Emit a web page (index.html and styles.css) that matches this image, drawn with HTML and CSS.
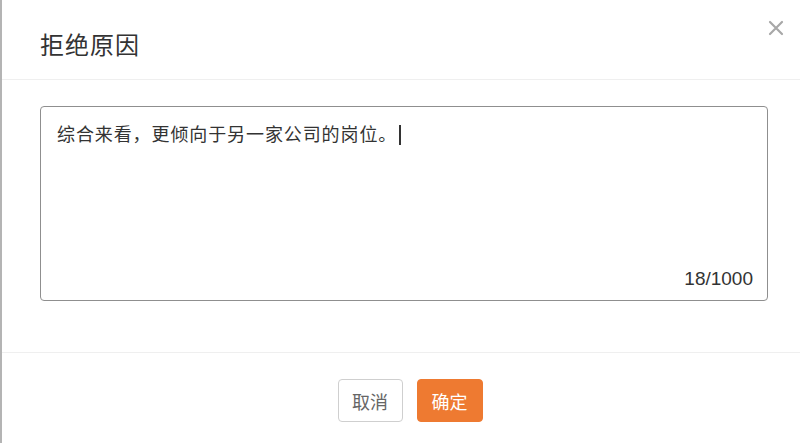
FILE: index.html
```html
<!DOCTYPE html>
<html lang="zh">
<head>
<meta charset="utf-8">
<link rel="stylesheet" href="styles.css">
</head>
<body>
<div class="modal">
  <div class="modal-header">
    <h2 class="modal-title">拒绝原因</h2>
    <button class="close" aria-label="关闭">
      <svg width="16" height="16" viewBox="0 0 16 16"><path d="M2 2L14 14M14 2L2 14" stroke="#a8a8a8" stroke-width="2.2" stroke-linecap="round"/></svg>
    </button>
  </div>
  <div class="modal-body">
    <div class="textbox">
      <div class="text">综合来看，更倾向于另一家公司的岗位。<span class="caret"></span></div>
      <div class="counter">18/1000</div>
    </div>
  </div>
  <div class="modal-footer">
    <button class="btn btn-default">取消</button>
    <button class="btn btn-primary">确定</button>
  </div>
</div>
</body>
</html>
```
FILE: styles.css
```css
html, body {
  margin: 0;
  padding: 0;
  background: #fff;
}
body {
  font-family: "Liberation Sans", "Noto Sans CJK SC", sans-serif;
  color: #333;
}
.modal {
  width: 800px;
  height: 443px;
  box-sizing: border-box;
  border-left: 2px solid #b4b4b4;
  background: #fff;
  display: flex;
  flex-direction: column;
}
.modal-header {
  height: 79px;
  border-bottom: 1px solid #efefef;
  display: flex;
  align-items: center;
  justify-content: space-between;
  padding: 0 14px 0 38px;
  position: relative;
}
.modal-title {
  margin: 0;
  font-size: 24px;
  font-weight: normal;
  color: #333;
  letter-spacing: 1px;
  padding-top: 8px;
}
.close {
  position: absolute;
  right: 16px;
  top: 20px;
  border: 0;
  background: none;
  padding: 0;
  width: 16px;
  height: 16px;
  cursor: pointer;
}
.modal-body {
  padding: 26px 32px 51px 38px;
  border-bottom: 1px solid #efefef;
}
.textbox {
  height: 195px;
  box-sizing: border-box;
  border: 1.5px solid #8f8f8f;
  border-radius: 4px;
  padding: 14px 14px 10px 16px;
  display: flex;
  flex-direction: column;
  justify-content: space-between;
}
.text {
  font-size: 18px;
  line-height: 28px;
  color: #333;
  letter-spacing: 0.9px;
}
.caret {
  display: inline-block;
  width: 1.5px;
  height: 20px;
  background: #333;
  vertical-align: -4px;
  margin-left: 2px;
}
.counter {
  align-self: flex-end;
  font-size: 19px;
  color: #333;
  line-height: 22px;
}
.modal-footer {
  flex: 1;
  display: flex;
  justify-content: center;
  align-items: flex-start;
  padding: 26px 0 0 18px;
  gap: 14px;
}
.btn {
  height: 43px;
  width: 66px;
  border-radius: 4px;
  font-family: "Liberation Sans", "Noto Sans CJK SC", sans-serif;
  font-size: 18px;
  padding: 0;
  box-sizing: border-box;
}
.btn-default {
  background: #fff;
  border: 1.5px solid #cfcfcf;
  color: #666;
  width: 65px;
}
.btn-primary {
  background: #ee7a31;
  border: 1px solid #ee7a31;
  color: #fff;
}
```
